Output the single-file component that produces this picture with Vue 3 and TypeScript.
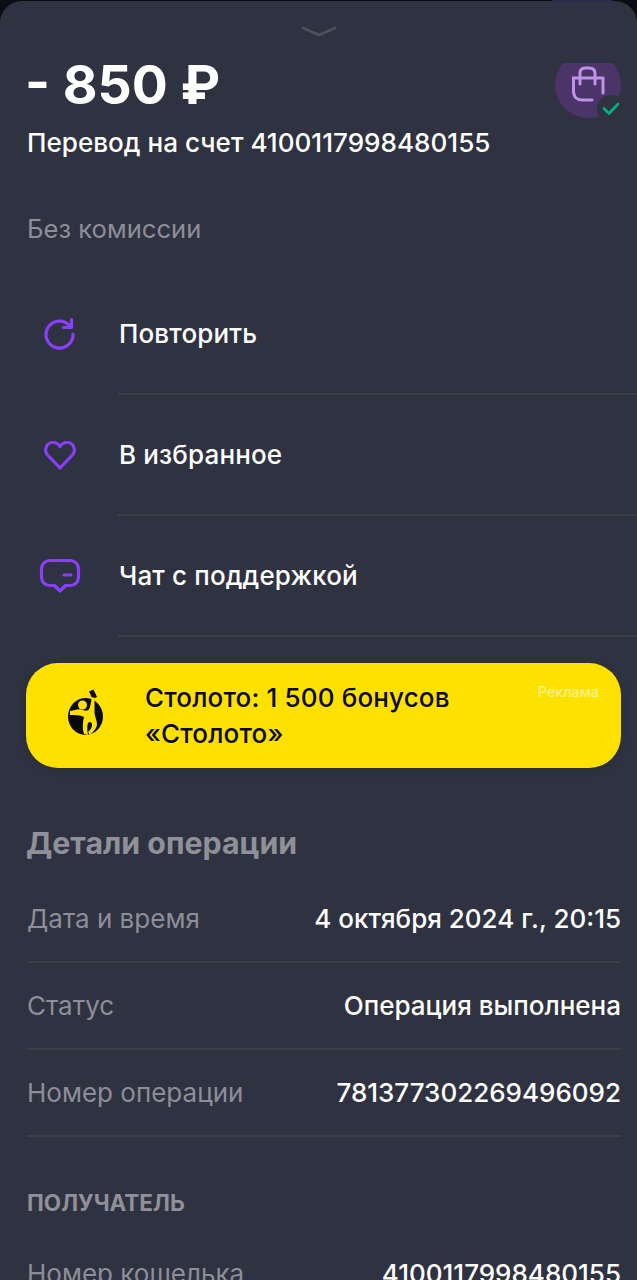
<script setup lang="ts">
const actions = [
  { id: 'repeat', label: 'Повторить' },
  { id: 'favorite', label: 'В избранное' },
  { id: 'chat', label: 'Чат с поддержкой' },
];

const details = [
  { name: 'Дата и время', value: '4 октября 2024 г., 20:15' },
  { name: 'Статус', value: 'Операция выполнена' },
  { name: 'Номер операции', value: '781377302269496092' },
];
</script>

<template>
  <div class="page">
    <div class="peek"></div>
    <div class="sheet">
      <div class="handle">
        <svg width="36" height="12" viewBox="0 0 36 12" fill="none">
          <path d="M2 2 L18 9 L34 2" stroke="#4f515d" stroke-width="3" stroke-linecap="round" stroke-linejoin="round" />
        </svg>
      </div>

      <div class="head">
        <div class="head-text">
          <div class="amount">- 850 ₽</div>
          <div class="purpose">Перевод на счет 4100117998480155</div>
        </div>
        <div class="avatar">
          <div class="avatar-clip">
            <svg width="50" height="50" viewBox="0 0 50 50" fill="none">
              <path d="M40 18H10.500V31C10.500 37 14 40 19 40H29M40 18V33M17 24V13C17 9.500 19.500 8 22.500 8H26C29.500 8 32 9.500 32 13V24" stroke="#c092e8" stroke-width="3" stroke-linecap="round" />
            </svg>
          </div>
          <div class="badge">
            <svg width="18" height="14" viewBox="0 0 18 14" fill="none">
              <path d="M2 6.500 L7 11.500 L16 2" stroke="#00b583" stroke-width="2.600" stroke-linecap="round" stroke-linejoin="round" />
            </svg>
          </div>
        </div>
      </div>

      <div class="fee">Без комиссии</div>

      <div class="actions">
        <div v-for="a in actions" :key="a.id" class="action">
          <div class="action-icon">
            <svg v-if="a.id === 'repeat'" width="34" height="34" viewBox="0 0 34 34" fill="none">
              <path d="M26.500 8.500A13.500 13.500 0 1 0 30 17" stroke="#8a3ffc" stroke-width="3.200" stroke-linecap="round" />
              <path d="M28.500 2.500V10.500H20.500" stroke="#8a3ffc" stroke-width="3.200" stroke-linecap="round" stroke-linejoin="round" />
            </svg>
            <svg v-else-if="a.id === 'favorite'" width="34" height="34" viewBox="0 0 34 34" fill="none">
              <path d="M17 30 L4.500 17C1 13 2.500 5 9.500 4.500C13 4.300 15.500 6 17 8.500C18.500 6 21 4.300 24.500 4.500C31.500 5 33 13 29.500 17Z" stroke="#8a3ffc" stroke-width="3.200" stroke-linejoin="round" />
            </svg>
            <svg v-else width="42" height="36" viewBox="0 0 42 36" fill="none">
              <path d="M11 2.500H31C36 2.500 39.500 6 39.500 11V19C39.500 24 36 27.500 31 27.500H26.500L21 33L15.500 27.500H11C6 27.500 2.500 24 2.500 19V11C2.500 6 6 2.500 11 2.500Z" stroke="#8a3ffc" stroke-width="3.200" stroke-linejoin="round" />
              <path d="M25 17H32" stroke="#8a3ffc" stroke-width="3.200" stroke-linecap="round" />
            </svg>
          </div>
          <div class="action-label">{{ a.label }}</div>
        </div>
      </div>

      <div class="promo">
        <div class="promo-logo">
          <svg width="40" height="56" viewBox="0 0 40 56" fill="none">
            <path d="M22 8.500L26.500 6.500L30 14L25.500 16Z" fill="#0a0a0a" />
            <ellipse cx="18.500" cy="33.500" rx="17.500" ry="18.500" fill="#0a0a0a" />
            <circle cx="15.500" cy="22" r="4.500" fill="#ffe100" />
            <path d="M3 28C8 27 12 25 16 27C20 29 22 27 23 24L25 14L27.500 15V30C28 34 30 38 30 41C30 45 27 48 23 52L21 49C23 47 25 45 25 42C25 39 23 38 21 40C20 43 20 47 21 52L17 51C15 45 16 38 17 34C13 32 8 32 3 32Z" fill="#ffe100" />
          </svg>
        </div>
        <div class="promo-title">Столото: 1 500 бонусов<br />«Столото»</div>
        <div class="promo-ad">Реклама</div>
      </div>

      <h2 class="section-title">Детали операции</h2>

      <div class="details">
        <div v-for="d in details" :key="d.name" class="detail">
          <span class="detail-name">{{ d.name }}</span>
          <span class="detail-value">{{ d.value }}</span>
        </div>
      </div>

      <div class="group-title">ПОЛУЧАТЕЛЬ</div>

      <div class="detail last">
        <span class="detail-name">Номер кошелька</span>
        <span class="detail-value">4100117998480155</span>
      </div>
    </div>
  </div>
</template>

<style scoped>
.page {
  position: relative;
  width: 637px;
  height: 1280px;
  overflow: hidden;
  background: #0c0d12;
  font-family: Inter, "Noto Sans", sans-serif;
}

.peek {
  position: absolute;
  left: 552px;
  top: 0;
  width: 60px;
  height: 2px;
  background: #2b2d4c;
}

.sheet {
  margin-top: 1px;
  height: 1279px;
  background: #2f3240;
  border-radius: 22px 22px 0 0;
  color: #fff;
}

.handle {
  display: flex;
  justify-content: center;
  padding-top: 25px;
  height: 31px;
}

.head {
  display: flex;
  justify-content: space-between;
  padding: 0 16px 0 27px;
}

.amount {
  font-size: 53.500px;
  font-weight: 700;
  line-height: 56px;
  margin-left: -2px;
}

.purpose {
  margin-top: 14px;
  font-size: 26.100px;
  font-weight: 500;
  line-height: 32px;
}

.avatar {
  position: relative;
  width: 66px;
  height: 66px;
  margin-top: -5px;
}

.avatar-clip {
  width: 66px;
  height: 66px;
  border-radius: 50%;
  background: #4a3468;
  clip-path: inset(11px 0 0 0);
  display: flex;
  align-items: center;
  justify-content: center;
}

.badge {
  position: absolute;
  right: -4px;
  bottom: -5px;
  width: 28px;
  height: 28px;
  border-radius: 50%;
  background: #2f3340;
  display: flex;
  align-items: center;
  justify-content: center;
}

.fee {
  margin: 54px 0 0 27px;
  font-size: 25.600px;
  line-height: 32px;
  color: #8d8e98;
}

.actions {
  margin-top: 29px;
}

.action {
  display: flex;
  align-items: center;
  height: 119px;
  border-bottom: 2px solid #3c3e4a;
  margin-left: 118px;
  position: relative;
}

.action-icon {
  position: absolute;
  left: -80px;
  top: 0;
  bottom: 0;
  width: 44px;
  display: flex;
  align-items: center;
  justify-content: center;
}

.action-label {
  padding-left: 1px;
  font-size: 26px;
  font-weight: 500;
  letter-spacing: 0.150px;
}

.promo {
  position: relative;
  display: flex;
  align-items: center;
  height: 105px;
  margin: 26px 16px 0 26px;
  padding-left: 119px;
  border-radius: 32px;
  background: #ffe100;
  box-shadow: 0 2px 10px rgba(0, 0, 0, 0.12);
}

.promo-logo {
  position: absolute;
  left: 41px;
  top: 20px;
}

.promo-title {
  font-size: 26px;
  font-weight: 500;
  line-height: 36px;
  color: #0a0a0a;
  letter-spacing: 0.150px;
}

.promo-ad {
  position: absolute;
  right: 22px;
  top: 20px;
  font-size: 14.500px;
  color: #fff3a0;
}

.section-title {
  margin: 56px 0 0 26px;
  font-size: 30.300px;
  font-weight: 700;
  line-height: 38px;
  color: #8f9098;
}

.details {
  margin: 14px 16px 0 27px;
}

.detail {
  display: flex;
  justify-content: space-between;
  align-items: center;
  height: 85px;
  border-bottom: 2px solid #3c3e4a;
  font-size: 26px;
}

.detail.last {
  margin: 14px 16px 0 27px;
  border: none;
}

.detail-name {
  color: #8d8e98;
}

.detail-value {
  font-weight: 500;
}

.group-title {
  margin: 52px 0 0 27px;
  font-size: 22.500px;
  font-weight: 700;
  line-height: 28px;
  color: #8f9098;
}
</style>
